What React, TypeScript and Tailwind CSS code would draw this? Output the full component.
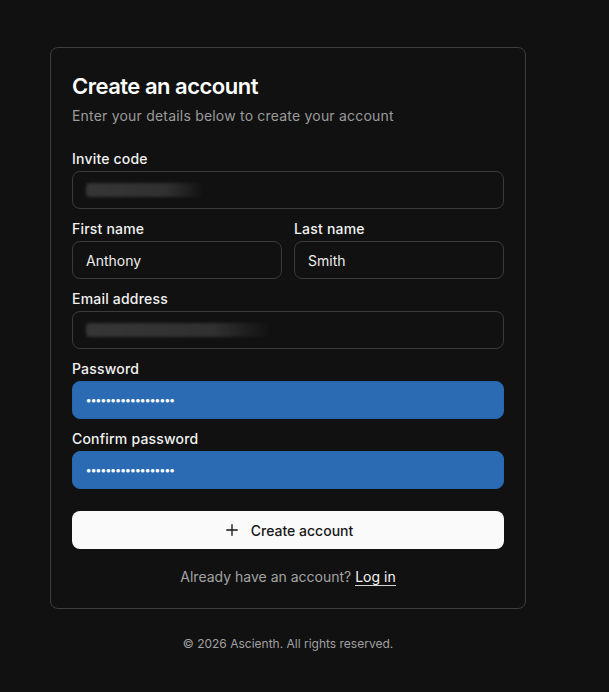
const font = { fontFamily: 'Inter, "Noto Sans", sans-serif' };

function Label({ children }: { children: string }) {
  return <div className="h-5 text-[14px] font-medium leading-5 tracking-[0.2px] text-[#f2f2f2]">{children}</div>;
}

function Field({ label, children, filled }: { label: string; children?: React.ReactNode; filled?: boolean }) {
  return (
    <div className="flex flex-col gap-[2px]">
      <Label>{label}</Label>
      <div
        className={
          filled
            ? 'flex h-[38px] items-center rounded-lg border border-[#2a66ad] bg-[#2a6bb4] px-[13px]'
            : 'flex h-[38px] items-center rounded-lg border border-[#3b3b3b] bg-[#111111] px-[13px] text-[14px] text-[#ededed]'
        }
      >
        {children}
      </div>
    </div>
  );
}

function Blur({ w }: { w: number }) {
  return (
    <div
      className="h-[14px] rounded-sm blur-[1.5px]"
      style={{ width: w, background: 'linear-gradient(90deg, #363636 0%, #303030 70%, rgba(40,40,40,0) 100%)' }}
    />
  );
}

function Dots() {
  return <span className="text-[11px] font-bold leading-none tracking-[-0.3px] text-white">••••••••••••••••••</span>;
}

export default function App() {
  return (
    <div className="min-h-screen bg-[#111111]" style={font}>
      <div className="flex w-[576px] flex-col items-center pt-[47px]">
        <div className="w-[476px] rounded-lg border border-[#3d3d3d] bg-[#111111] px-[21px] pb-[21px] pt-6">
          <h1 className="text-[22px] font-semibold leading-7 tracking-[-0.5px] text-white">Create an account</h1>
          <p className="mt-1.5 text-[14px] leading-5 tracking-[0.2px] text-[#9b9b9b]">Enter your details below to create your account</p>

          <div className="mt-[23px] flex flex-col gap-[10px]">
            <Field label="Invite code">
              <Blur w={118} />
            </Field>
            <div className="grid grid-cols-2 gap-3">
              <Field label="First name">Anthony</Field>
              <Field label="Last name">Smith</Field>
            </div>
            <Field label="Email address">
              <Blur w={185} />
            </Field>
            <Field label="Password" filled>
              <Dots />
            </Field>
            <Field label="Confirm password" filled>
              <Dots />
            </Field>
          </div>

          <button className="mt-[22px] flex h-[38px] w-full items-center justify-center gap-2.5 rounded-lg bg-[#fafafa] text-[14px] font-medium text-[#171717]">
            <svg width="18" height="18" viewBox="0 0 24 24" fill="none" stroke="currentColor" strokeWidth="1.8" strokeLinecap="round">
              <path d="M5 12h14M12 5v14" />
            </svg>
            Create account
          </button>

          <p className="mt-[18px] text-center text-[14px] leading-5 text-[#a3a3a3]">
            Already have an account?{' '}
            <a className="border-b border-[#d4d4d4] text-[#f5f5f5]">Log in</a>
          </p>
        </div>
        <p className="mt-[27px] text-[12px] leading-4 text-[#a0a0a0]">© 2026 Ascienth. All rights reserved.</p>
      </div>
    </div>
  );
}
